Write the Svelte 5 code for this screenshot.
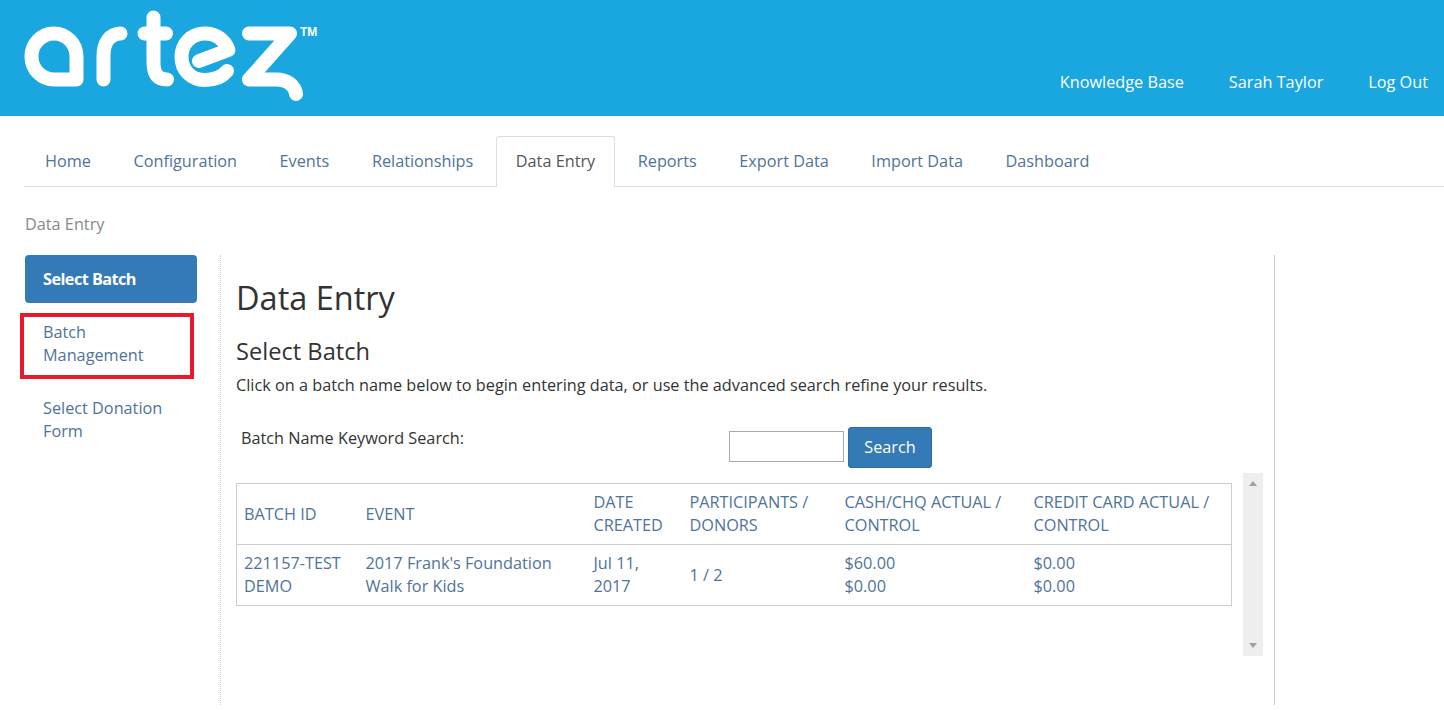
<script>
  const tabs = ["Home", "Configuration", "Events", "Relationships", "Data Entry", "Reports", "Export Data", "Import Data", "Dashboard"];
  const columns = [
    { label: "BATCH ID", width: 122 },
    { label: "EVENT", width: 228 },
    { label: "DATE CREATED", width: 96 },
    { label: "PARTICIPANTS / DONORS", width: 155 },
    { label: "CASH/CHQ ACTUAL / CONTROL", width: 189 },
    { label: "CREDIT CARD ACTUAL / CONTROL", width: 205 },
  ];
</script>

<header class="header">
  <svg class="logo" width="320" height="116" viewBox="0 0 320 116" aria-label="artez">
    <g fill="none" stroke="#fff" stroke-width="14" stroke-linecap="round" stroke-linejoin="round">
      <path d="M76.500 79.500H54.500a22.500 23 0 1 1 22-23Z" />
      <path d="M103.500 79.500V56C103.500 42 110 34 120.500 33.500" />
      <path d="M153.500 17.500V62C153.500 73 157 79.500 167 79.500M144.500 33.500H166" />
      <path d="M199 61L228.500 50C225 40 216 33.500 205 33.500C191 33.500 181.500 44 181.500 57C181.500 70 191 80 205 80C215 80 222 77 227 71" />
      <path d="M249 33.500H290L249 79.500H276C288 79.500 295 86 296 94" />
    </g>
    <text class="tm" x="300" y="36">TM</text>
  </svg>
  <nav class="user-links">
    <span>Knowledge Base</span>
    <span>Sarah Taylor</span>
    <span>Log Out</span>
  </nav>
</header>

<ul class="tabs">
  {#each tabs as tab}
    <li class:active={tab === "Data Entry"}>{tab}</li>
  {/each}
</ul>

<div class="crumb">Data Entry</div>

<div class="content">
  <aside class="sidebar">
    <div class="side-item selected">Select Batch</div>
    <div class="side-item highlighted">Batch Management</div>
    <div class="side-item">Select Donation Form</div>
  </aside>

  <main class="main">
    <h1>Data Entry</h1>
    <h2>Select Batch</h2>
    <p>Click on a batch name below to begin entering data, or use the advanced search refine your results.</p>

    <div class="search-row">
      <span class="search-label">Batch Name Keyword Search:</span>
      <input type="text" aria-label="Batch name" />
      <button>Search</button>
    </div>

    <div class="table-wrap">
      <table>
        <colgroup>
          {#each columns as col}
            <col style="width: {col.width}px" />
          {/each}
        </colgroup>
        <thead>
          <tr>
            {#each columns as col}
              <th>{col.label}</th>
            {/each}
          </tr>
        </thead>
        <tbody>
          <tr>
            <td>221157-TEST DEMO</td>
            <td>2017 Frank's Foundation Walk for Kids</td>
            <td>Jul 11, 2017</td>
            <td>1 / 2</td>
            <td>$60.00<br />$0.00</td>
            <td>$0.00<br />$0.00</td>
          </tr>
        </tbody>
      </table>
      <div class="scrollbar">
        <span class="arrow up"></span>
        <span class="arrow down"></span>
      </div>
    </div>
  </main>
</div>

<style>
  :global(body) {
    font-family: "Open Sans", sans-serif;
    font-size: 16.25px;
    line-height: 23px;
    color: #333;
    background: #fff;
    overflow: hidden;
  }

  .header {
    height: 116px;
    background: #1aa6df;
    display: flex;
    justify-content: space-between;
    align-items: flex-end;
  }

  .logo {
    display: block;
  }

  .tm {
    font-family: "Liberation Sans", sans-serif;
    font-size: 12px;
    font-weight: 700;
    fill: #fff;
  }

  .user-links {
    display: flex;
    gap: 45px;
    padding: 0 16px 22px 0;
    color: #fff;
  }

  .tabs {
    list-style: none;
    display: flex;
    margin: 20px 0 0 24px;
    padding: 0 0 0 1px;
    height: 50px;
    border-bottom: 1px solid #ddd;
  }

  .tabs li {
    padding: 13px 19px 0;
    margin-right: 2.500px;
    border: 1px solid transparent;
    border-bottom: none;
    color: #4f7399;
    height: 50px;
    box-sizing: border-box;
  }

  .tabs li.active {
    height: 51px;
    background: #fff;
    border-color: #ddd;
    color: #555;
    border-radius: 3px 3px 0 0;
  }

  .crumb {
    margin: 26px 0 0 25px;
    color: #888;
  }

  .content {
    display: flex;
    margin: 19px 0 0 25px;
    height: 450px;
  }

  .sidebar {
    width: 172px;
    flex-shrink: 0;
  }

  .side-item {
    position: relative;
    padding: 12px 18px;
    margin-bottom: 6px;
    color: #4f7399;
    border-radius: 4px;
  }

  .side-item.selected {
    padding: 13px 18px 12px;
    background: #337ab7;
    color: #fff;
    font-weight: 700;
    letter-spacing: -0.55px;
  }

  .side-item.highlighted::after {
    content: "";
    position: absolute;
    left: -5px;
    top: 4px;
    width: 174px;
    height: 66px;
    box-sizing: border-box;
    border: 4px solid #e8192c;
  }

  .main {
    margin-left: 23px;
    width: 1055px;
    box-sizing: border-box;
    padding: 0 11px 0 15px;
    border-left: 1px dotted #ccc;
    border-right: 1px solid #ccc;
  }

  h1 {
    margin: 20px 0 0;
    font-size: 32.5px;
    line-height: 46px;
    font-weight: 400;
  }

  h2 {
    margin: 14px 0 0;
    font-size: 23.65px;
    line-height: 32px;
    font-weight: 400;
  }

  p {
    margin: 7px 0 0;
  }

  .search-row {
    display: flex;
    align-items: flex-start;
    margin-top: 30px;
    height: 41px;
  }

  .search-label {
    width: 488px;
    padding-left: 5px;
    box-sizing: content-box;
  }

  input {
    width: 115px;
    height: 31px;
    margin-top: 4px;
    box-sizing: border-box;
    border: 1px solid #aaa;
    padding: 0;
  }

  button {
    margin-left: 4px;
    width: 84px;
    height: 41px;
    background: #337ab7;
    border: 1px solid #2e6da4;
    border-radius: 3px;
    color: #fff;
    font: inherit;
    padding: 0;
  }

  .table-wrap {
    display: flex;
    align-items: flex-start;
    margin-top: 5px;
  }

  table {
    margin-top: 10px;
    width: 997px;
    table-layout: fixed;
    border-collapse: collapse;
    border: 1px solid #ccc;
    color: #4f7399;
    box-sizing: border-box;
  }

  th,
  td {
    padding: 7px;
    text-align: left;
    font-weight: 400;
    vertical-align: middle;
  }

  th {
    border-bottom: 1px solid #ccc;
  }

  .scrollbar {
    position: relative;
    margin-left: 11px;
    width: 20px;
    height: 183px;
    background: #eee;
  }

  .arrow {
    position: absolute;
    left: 6px;
    width: 0;
    height: 0;
    border-left: 4px solid transparent;
    border-right: 4px solid transparent;
  }

  .arrow.up {
    top: 8px;
    border-bottom: 5px solid #a0a0a0;
  }

  .arrow.down {
    bottom: 8px;
    border-top: 5px solid #a0a0a0;
  }
</style>
